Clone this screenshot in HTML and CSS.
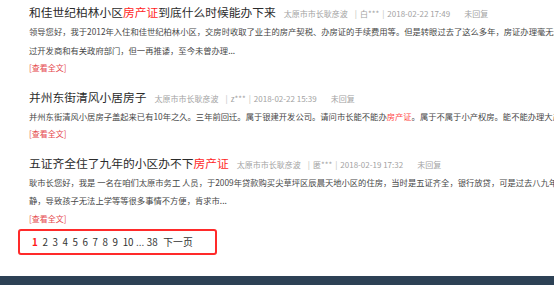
FILE: index.html
```html
<!DOCTYPE html>
<html lang="zh-CN">
<head>
<meta charset="utf-8">
<title>列表</title>
<link rel="stylesheet" href="styles.css">
</head>
<body>
<div class="page">
  <div class="list">
    <div class="item">
      <div class="head">
        <span class="title">和佳世纪柏林小区<em>房产证</em>到底什么时候能办下来</span>
        <span class="meta"><span class="who">太原市市长耿彦波</span><i>|</i>白***<i>|</i>2018-02-22 17:49<b>未回复</b></span>
      </div>
      <div class="desc">
        <span class="line">领导您好，我于2012年入住和佳世纪柏林小区，交房时收取了业主的房产契税、办房证的手续费用等。但是转眼过去了这么多年，房证办理毫无进展，业主多次找</span>
        <span class="line">过开发商和有关政府部门，但一再推诿，至今未曾办理...</span>
      </div>
      <a class="more" href="#">[查看全文]</a>
    </div>
    <div class="item">
      <div class="head">
        <span class="title">并州东街清风小居房子</span>
        <span class="meta"><span class="who">太原市市长耿彦波</span><i>|</i>z***<i>|</i>2018-02-22 15:39<b>未回复</b></span>
      </div>
      <div class="desc">
        <span class="line">并州东街清风小居房子盖起来已有10年之久。三年前回迁。属于银建开发公司。请问市长能不能办<em>房产证</em>。属于不属于小产权房。能不能办理大产权证...</span>
      </div>
      <a class="more" href="#">[查看全文]</a>
    </div>
    <div class="item last">
      <div class="head">
        <span class="title">五证齐全住了九年的小区办不下<em>房产证</em></span>
        <span class="meta"><span class="who">太原市市长耿彦波</span><i>|</i>匿***<i>|</i>2018-02-19 17:32<b>未回复</b></span>
      </div>
      <div class="desc">
        <span class="line">耿市长您好，我是 一名在咱们太原市务工 人员，于2009年贷款购买尖草坪区辰晨天地小区的住房，当时是五证齐全，银行放贷，可是过去八九年了房产证一直没有动</span>
        <span class="line">静，导致孩子无法上学等等很多事情不方便，肯求市...</span>
      </div>
      <a class="more" href="#">[查看全文]</a>
    </div>
  </div>
  <div class="pager">
    <a class="cur" href="#">1</a>
    <a href="#">2</a>
    <a href="#">3</a>
    <a href="#">4</a>
    <a href="#">5</a>
    <a href="#">6</a>
    <a href="#">7</a>
    <a href="#">8</a>
    <a href="#">9</a>
    <a href="#">10</a>
    <span class="dots">...</span>
    <a href="#">38</a>
    <a class="next" href="#">下一页</a>
  </div>
  <div class="footer"></div>
</div>
</body>
</html>
```
FILE: styles.css
```css
html, body {
  margin: 0;
  padding: 0;
  background: #fff;
}
body {
  font-family: "Noto Sans CJK SC", "Microsoft YaHei", sans-serif;
  color: #333;
  overflow: hidden;
}
.page {
  width: 100%;
  overflow: hidden;
}
.list {
  padding: 2px 0 0 29px;
}
.item {
  margin-bottom: 9px;
}
.item.last {
  margin-bottom: 1px;
}
.head {
  display: flex;
  align-items: baseline;
  white-space: nowrap;
  line-height: 20px;
  height: 20px;
}
.title {
  font-size: 11.75px;
  color: #2b2b2b;
}
.title em {
  font-style: normal;
  color: #ff1f1f;
}
.meta {
  margin-left: 8px;
  font-size: 8px;
  color: #a3a3a3;
}
.meta .who {
  margin-right: 4px;
}
.meta i {
  font-style: normal;
  margin: 0 3px;
  color: #bbb;
}
.meta b {
  font-weight: normal;
  margin-left: 14px;
}
.desc {
  font-size: 8.3px;
  color: #474747;
  line-height: 18.5px;
}
.desc .line {
  display: block;
  white-space: nowrap;
}
.desc em {
  font-style: normal;
  color: #ff4848;
}
.more {
  display: block;
  font-size: 8px;
  line-height: 18.5px;
  color: #e5484d;
  text-decoration: none;
}
.pager {
  margin-left: 18px;
  width: 199px;
  height: 26px;
  box-sizing: border-box;
  border: 2px solid #ff2a2a;
  border-radius: 3px;
  display: flex;
  align-items: center;
  padding-left: 12px;
  gap: 4.6px;
  font-size: 9.8px;
  white-space: nowrap;
}
.pager a {
  color: #333;
  text-decoration: none;
}
.pager a.cur {
  color: #ff1a1a;
  font-weight: bold;
}
.pager .dots {
  color: #333;
  margin: 0 -2px;
}
.pager a.next {
  margin-left: 1px;
}
.footer {
  margin-top: 21px;
  height: 9px;
  background: #2d4155;
}
```
